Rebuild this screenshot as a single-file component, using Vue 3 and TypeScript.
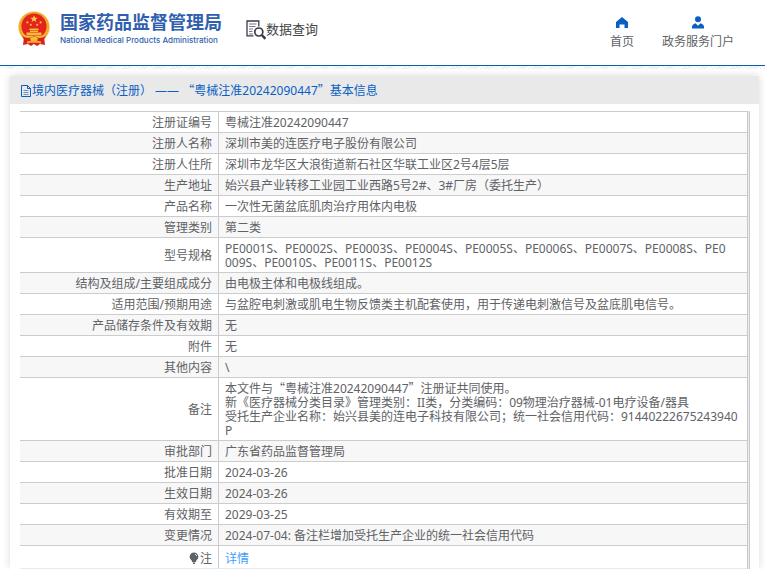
<script setup lang="ts">
interface Row {
  label: string
  lines: string[]
}

const certNo = '粤械注准20242090447'
const title = `境内医疗器械（注册） —— “${certNo}”基本信息`

const rows: Row[] = [
  { label: '注册证编号', lines: [certNo] },
  { label: '注册人名称', lines: ['深圳市美的连医疗电子股份有限公司'] },
  { label: '注册人住所', lines: ['深圳市龙华区大浪街道新石社区华联工业区2号4层5层'] },
  { label: '生产地址', lines: ['始兴县产业转移工业园工业西路5号2#、3#厂房（委托生产）'] },
  { label: '产品名称', lines: ['一次性无菌盆底肌肉治疗用体内电极'] },
  { label: '管理类别', lines: ['第二类'] },
  {
    label: '型号规格',
    lines: [
      'PE0001S、PE0002S、PE0003S、PE0004S、PE0005S、PE0006S、PE0007S、PE0008S、PE0',
      '009S、PE0010S、PE0011S、PE0012S',
    ],
  },
  { label: '结构及组成/主要组成成分', lines: ['由电极主体和电极线组成。'] },
  {
    label: '适用范围/预期用途',
    lines: ['与盆腔电刺激或肌电生物反馈类主机配套使用，用于传递电刺激信号及盆底肌电信号。'],
  },
  { label: '产品储存条件及有效期', lines: ['无'] },
  { label: '附件', lines: ['无'] },
  { label: '其他内容', lines: ['\\'] },
  {
    label: '备注',
    lines: [
      '本文件与“粤械注准20242090447”注册证共同使用。',
      '新《医疗器械分类目录》管理类别：II类，分类编码：09物理治疗器械-01电疗设备/器具',
      '受托生产企业名称：始兴县美的连电子科技有限公司；统一社会信用代码：91440222675243940P',
    ],
  },
  { label: '审批部门', lines: ['广东省药品监督管理局'] },
  { label: '批准日期', lines: ['2024-03-26'] },
  { label: '生效日期', lines: ['2024-03-26'] },
  { label: '有效期至', lines: ['2029-03-25'] },
  { label: '变更情况', lines: ['2024-07-04: 备注栏增加受托生产企业的统一社会信用代码'] },
]

// Splits out curly quotes so that they are set full-width in a CJK face.
function parts(text: string): string[] {
  return text.split(/([“”])/).filter((p) => p !== '')
}

function isQuote(part: string): boolean {
  return part === '“' || part === '”'
}
</script>

<template>
  <div class="page">
    <header class="top">
      <a class="brand" href="#">
        <svg class="emblem" viewBox="0 0 32 35" aria-hidden="true">
          <path d="M6 26 5 34 10 33 13 35 16 33 19 35 22 33 27 34 26 26Z" fill="#d8231c" />
          <circle cx="16" cy="16" r="15.6" fill="#f3b52e" />
          <circle cx="16" cy="16" r="14.2" fill="none" stroke="#e39a22" stroke-width="1" stroke-dasharray="2 1.4" />
          <circle cx="16" cy="15.2" r="12.6" fill="#e3231c" />
          <path d="m16 4.2 1 2.5 2.7.1-2.1 1.7.7 2.6-2.3-1.5-2.3 1.5.7-2.6-2.1-1.7 2.7-.1z" fill="#f9cf45" />
          <g fill="#f5bc3a">
            <circle cx="9.4" cy="11.4" r="1.1" />
            <circle cx="12.8" cy="13.8" r="1.1" />
            <circle cx="19.2" cy="13.8" r="1.1" />
            <circle cx="22.6" cy="11.4" r="1.1" />
            <path d="M12 17.4h8l1.2 1.6H10.8zM12 19.6h8V21h-8zM8.5 21.6h15V24h-15zM5 24.5h22l-1.6 2.2H6.600z" />
          </g>
          <path d="M4 25q4 2.500 8 2l4-2 4 2q4 .5 8-2l-3 5q-5 1-7-.5l-2-1-2 1q-2 1.500-7 .5z" fill="#d8231c" />
          <path d="M12 27.500q4-4 8 0l-1 2.500h-6z" fill="#f5bc3a" />
          <path d="M9 30.500q7-2 14 0v2q-7-2-14 0z" fill="#f3a72b" />
        </svg>
        <span class="names">
          <strong class="name-zh">国家药品监督管理局</strong>
          <span class="name-en">National Medical Products Administration</span>
        </span>
      </a>
      <a class="query" href="#">
        <svg class="query-icon" viewBox="0 0 20 20" aria-hidden="true" fill="none" stroke="#3a3a4c">
          <path d="M7.500 15.900H1V1h11.800v5.500" stroke-width="1.300" />
          <path d="M3 4h7.500M3 6.500h6.500M3 9h4M3 11.500h3.500M3 14h4" stroke-width="1" stroke="#77778a" />
          <circle cx="12.800" cy="12" r="4" stroke-width="1.700" />
          <path d="m15.800 15 3.600 3.800" stroke-width="2.500" />
        </svg>
        <span class="query-text">数据查询</span>
      </a>
      <nav class="menu">
        <a href="#">
          <svg viewBox="0 0 14 14" aria-hidden="true">
            <path d="M7 1 13 6V12H9.500V8.500h-5V12H1V6z" fill="#0a5fc4" />
          </svg>
          <span>首页</span>
        </a>
        <a href="#">
          <svg viewBox="0 0 14 14" aria-hidden="true">
            <circle cx="7" cy="3.200" r="3" fill="#0a5fc4" />
            <path d="M1 12.500V11Q1 8.500 4.500 7.300L7 9.800l2.500-2.500Q13 8.500 13 11v1.500z" fill="#0a5fc4" />
          </svg>
          <span>政务服务门户</span>
        </a>
      </nav>
    </header>
    <div class="hatch"></div>

    <main class="panel">
      <h1 class="title">
        <svg viewBox="0 0 12 12" aria-hidden="true" fill="none" stroke="#0a5fc4">
          <path d="M1.500.5h6l3 3v8h-9zM7.500.5v3h3" />
          <path d="M3.500 5.500h5M3.500 7.500h5M3.500 9.500h5" stroke-opacity=".6" />
        </svg>
        <span><span v-for="(part, i) in parts(title)" :key="i" :class="{ quote: isQuote(part) }">{{ part }}</span></span>
      </h1>
      <div class="frame">
        <table class="info">
          <tbody>
            <tr v-for="row in rows" :key="row.label">
              <th scope="row">{{ row.label }}</th>
              <td>
                <div v-for="line in row.lines" :key="line">
                  <span v-for="(part, i) in parts(line)" :key="i" :class="{ quote: isQuote(part) }">{{ part }}</span>
                </div>
              </td>
            </tr>
            <tr class="note">
              <th scope="row">
                <svg viewBox="0 0 10 12" aria-hidden="true">
                  <path d="M5 .5a4.300 4.300 0 0 1 2.500 7.800L6.800 10H3.200L2.500 8.300A4.300 4.300 0 0 1 5 .5zM3.600 10.500h2.800L5.800 12H4.200z" fill="#606266" />
                  <path d="M6 2.200q1.400.4 1.700 1.800" stroke="#fff" stroke-width=".8" fill="none" />
                </svg>注
              </th>
              <td><a href="#">详情</a></td>
            </tr>
          </tbody>
        </table>
      </div>
    </main>
  </div>
</template>

<style>
body {
  background: #fff;
}
</style>

<style scoped>
.page {
  display: flex;
  flex-direction: column;
  min-height: 100vh;
  font: 12px/14px "Noto Sans", "Noto Sans CJK SC", sans-serif;
  color: #606266;
}

a {
  color: inherit;
  text-decoration: none;
}

.quote {
  font-family: "Noto Sans CJK SC", sans-serif;
  line-height: 1;
}

.top {
  display: flex;
  align-items: center;
  box-sizing: border-box;
  height: 66px;
  padding: 0 31px 0 18px;
  border-bottom: 1px solid #0a5cb0;
}

.brand {
  display: flex;
  align-items: center;
  gap: 10px;
  padding-bottom: 9px;
}

.emblem {
  width: 32px;
  height: 35px;
}

.names {
  display: flex;
  flex-direction: column;
  gap: 2px;
  color: #2f5fae;
  white-space: nowrap;
}

.name-zh {
  font: bold 18px/22px "Noto Sans CJK SC", sans-serif;
}

.name-en {
  font: 500 8px/12px Inter, sans-serif;
}

.query {
  display: flex;
  align-items: center;
  margin-left: 24px;
  padding-bottom: 5px;
  font-size: 13px;
  color: #444;
}

.query-icon {
  width: 20px;
  height: 20px;
}

.query-text {
  padding-bottom: 3px;
}

.menu {
  display: flex;
  gap: 28px;
  margin-left: auto;
}

.menu a {
  display: flex;
  flex-direction: column;
  align-items: center;
  gap: 5px;
}

.menu svg {
  width: 14px;
  height: 14px;
}

.hatch {
  height: 3px;
  background: repeating-linear-gradient(135deg, #fff 0 1px, #ececec 1px 2px);
}

.panel {
  flex: 1;
  margin: 7px 6px 0 10px;
  background: #fff;
  box-shadow: 0 0 8px rgba(0, 0, 0, 0.15);
}

.title {
  display: flex;
  align-items: center;
  box-sizing: border-box;
  height: 28px;
  margin: 0;
  padding: 1px 0 0 10px;
  background: #e9e9e9;
  font-size: 12px;
  font-weight: 400;
  color: #0a5fc4;
}

.title svg {
  width: 12px;
  height: 12px;
}

.frame {
  margin: 7px 9px 0 10px;
  padding-right: 1px;
  border-right: 1px solid #c8c8cc;
  background: #ececf4;
}

.info {
  width: 100%;
  border-collapse: separate;
  border-spacing: 0;
  table-layout: fixed;
  border-right: 1px solid #c8c8cc;
  background: #fff;
}

.info th,
.info td {
  padding: 4px 6px 2px;
  border-top: 1px solid #ccc;
  font-weight: 400;
  word-break: break-all;
}

.info th {
  box-sizing: border-box;
  width: 199px;
  border-right: 1px solid #ccc;
  text-align: right;
}

.info tr:nth-child(even) {
  background: #f7f7f7;
}

.info .note th,
.info .note td {
  padding: 6px 6px 2px;
  border-bottom: 1px solid #e6eaf5;
}

.info .note svg {
  width: 10px;
  height: 12px;
  margin-right: 1px;
  vertical-align: -1px;
}

.info .note a {
  color: #409eff;
}
</style>
